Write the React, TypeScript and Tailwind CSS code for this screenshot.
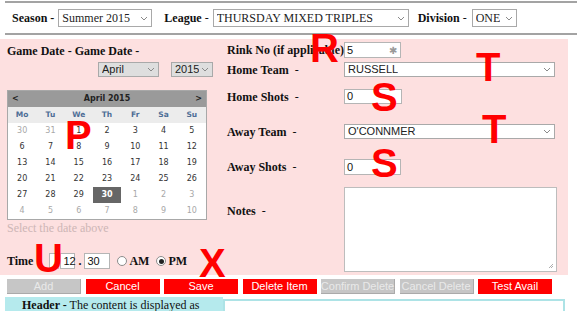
import React from "react";

const serif = "font-['Liberation_Serif','Times_New_Roman',serif]";
const sans = "font-['Liberation_Sans',Arial,sans-serif]";

function Chevron() {
  return (
    <svg width="8" height="5" viewBox="0 0 8 5" className="shrink-0">
      <path d="M1 1l3 3 3-3" fill="none" stroke="#8a8a8a" strokeWidth="1" />
    </svg>
  );
}

function Select({ value, className, font = sans, gray = false }: { value: string; className: string; font?: string; gray?: boolean }) {
  return (
    <div className={`flex items-center justify-between border border-[#a9a9a9] pl-[3px] pr-[3px] leading-[13px] text-[#222] ${gray ? "bg-[#dedede]" : "bg-white"} ${font} ${className}`}>
      <span className="overflow-hidden whitespace-nowrap">{value}</span>
      <Chevron />
    </div>
  );
}

function TextInput({ value, className, children }: { value: string; className: string; children?: React.ReactNode }) {
  return (
    <div className={`flex items-center justify-between border border-[#b5b5b5] bg-white pl-[2px] pr-[3px] text-[11px] leading-[13px] text-[#111] ${sans} ${className}`}>
      <span>{value}</span>
      {children}
    </div>
  );
}

const weeks = [
  [["30", 0], ["31", 0], ["1", 1], ["2", 1], ["3", 1], ["4", 1], ["5", 1]],
  [["6", 1], ["7", 1], ["8", 1], ["9", 1], ["10", 1], ["11", 1], ["12", 1]],
  [["13", 1], ["14", 1], ["15", 1], ["16", 1], ["17", 1], ["18", 1], ["19", 1]],
  [["20", 1], ["21", 1], ["22", 1], ["23", 1], ["24", 1], ["25", 1], ["26", 1]],
  [["27", 1], ["28", 1], ["29", 1], ["30", 2], ["1", 0], ["2", 0], ["3", 0]],
  [["4", 0], ["5", 0], ["6", 0], ["7", 0], ["8", 0], ["9", 0], ["10", 0]],
] as const;

function Calendar() {
  return (
    <div className="mt-[13px] w-[200px] border border-[#a8a8a8] bg-white font-['DejaVu_Sans',Verdana,sans-serif] leading-[10px]">
      <div className="flex h-[16px] items-center justify-between bg-[#9a9a9a] px-[4px] text-[8px] font-bold text-[#222]">
        <span>&lt;</span>
        <span>April 2015</span>
        <span>&gt;</span>
      </div>
      <div className="grid h-[16px] grid-cols-7 items-center bg-[#ececec] text-center text-[7.5px] font-bold text-[#4e6e96]">
        {["Mo", "Tu", "We", "Th", "Fr", "Sa", "Su"].map((d) => (
          <span key={d}>{d}</span>
        ))}
      </div>
      {weeks.map((week, i) => (
        <div key={i} className="grid h-[16px] grid-cols-7 text-center text-[8px]">
          {week.map(([day, kind], j) => (
            <span
              key={j}
              className={`flex items-center justify-center ${
                kind === 2 ? "bg-[#666] font-bold text-white" : kind === 1 ? "text-[#333]" : "text-[#a8a8a8]"
              }`}
            >
              {day}
            </span>
          ))}
        </div>
      ))}
    </div>
  );
}

function Radio({ checked }: { checked?: boolean }) {
  return (
    <span className="flex h-[10px] w-[10px] items-center justify-center rounded-full border border-[#8c8c8c] bg-white">
      {checked && <span className="h-[5px] w-[5px] rounded-full bg-[#222]" />}
    </span>
  );
}

function Row({ label, children, className = "" }: { label: string; children: React.ReactNode; className?: string }) {
  return (
    <div className={`flex items-center ${className}`}>
      <div className="w-[117px] whitespace-pre text-[12px] font-bold leading-[14px] text-[#111]">
        {label}
        <span className="font-normal">{"  -"}</span>
      </div>
      {children}
    </div>
  );
}

const buttons = [
  { label: "Add", on: false },
  { label: "Cancel", on: true },
  { label: "Save", on: true },
  { label: "Delete Item", on: true },
  { label: "Confirm Delete", on: false },
  { label: "Cancel Delete", on: false },
  { label: "Test Avail", on: true },
];

const marks = [
  { ch: "R", cls: "left-[310px] top-[28px]" },
  { ch: "T", cls: "left-[476px] top-[47px]" },
  { ch: "S", cls: "left-[371px] top-[77px]" },
  { ch: "T", cls: "left-[482px] top-[109px]" },
  { ch: "S", cls: "left-[371px] top-[143px]" },
  { ch: "P", cls: "left-[65px] top-[115px]" },
  { ch: "U", cls: "left-[34px] top-[238px]" },
  { ch: "X", cls: "left-[199px] top-[243px]" },
];

export default function App() {
  return (
    <div className={`relative h-[311px] w-[577px] overflow-hidden bg-white leading-[14px] ${serif}`}>
      {/* season / league / division bar */}
      <div className="ml-[5px] mt-[1px] flex h-[34px] items-center border-y-2 border-[#a3a3a3] pl-[7px] text-[12px] text-[#111]">
        <span className="font-bold">Season -</span>
        <Select value="Summer 2015" font={serif} className="ml-[4px] h-[18px] w-[94px] text-[12px]" />
        <span className="ml-[12px] font-bold">League</span>
        <span className="ml-[3px]">-</span>
        <Select value="THURSDAY MIXED TRIPLES" font={serif} className="ml-[4px] h-[18px] w-[196px] text-[12px]" />
        <span className="ml-[9px] font-bold">Division</span>
        <span className="ml-[3px]">-</span>
        <Select value="ONE" font={serif} className="ml-[5px] h-[18px] w-[45px] text-[12px]" />
      </div>

      {/* form */}
      <div className="mt-[4px] flex h-[236px] w-[568px] bg-[#fde0e0]">
        <div className="w-[220px] pl-[7px] pt-[5px]">
          <div className="text-[12px] font-bold leading-[14px] text-[#111]">Game Date - Game Date -</div>
          <div className="mt-[4px] flex h-[15px] gap-[12px] pl-[91px]">
            <Select value="April" gray className="h-[15px] w-[61px] text-[11px]" />
            <Select value="2015" gray className="h-[15px] w-[42px] text-[11px]" />
          </div>
          <Calendar />
          <div className="mt-[1px] text-[12px] leading-[14px] text-[#cdb6b6]">Select the date above</div>
          <div className="mt-[18px] flex h-[16px] items-center text-[12px] text-[#111]">
            <span className="font-bold">Time</span>
            <TextInput value="" className="ml-[16px] h-[16px] w-[10px]" />
            <TextInput value="12" className="ml-[1px] h-[16px] w-[15px]" />
            <span className="mx-[3px] font-bold">.</span>
            <TextInput value="30" className="h-[16px] w-[26px]" />
            <span className="ml-[7px]"><Radio /></span>
            <span className="ml-[2px] font-bold">AM</span>
            <span className="ml-[7px]"><Radio checked /></span>
            <span className="ml-[2px] font-bold">PM</span>
          </div>
        </div>

        <div className="flex-1 pl-[7px] pt-[3px]">
          <div className="flex items-center">
            <div className="w-[117px] overflow-hidden whitespace-nowrap text-[12px] font-bold leading-[14px] text-[#111]">Rink No (if applicable) -</div>
            <TextInput value="5" className="h-[16px] w-[57px]">
              <span className="text-[10px] text-[#9a9a9a]">✱</span>
            </TextInput>
          </div>
          <Row label="Home Team" className="mt-[4px]">
            <Select value="RUSSELL" className="h-[15px] w-[211px] text-[11px]" />
          </Row>
          <Row label="Home Shots" className="mt-[12px]">
            <TextInput value="0" className="h-[15px] w-[58px]" />
          </Row>
          <Row label="Away Team" className="mt-[20px]">
            <Select value="O'CONNMER" className="h-[15px] w-[211px] text-[11px]" />
          </Row>
          <Row label="Away Shots" className="mt-[20px]">
            <TextInput value="0" className="h-[16px] w-[57px]" />
          </Row>
          <div className="mt-[12px] flex items-start">
            <div className="w-[117px] whitespace-pre pt-[17px] text-[12px] font-bold leading-[14px] text-[#111]">
              Notes<span className="font-normal">{"  -"}</span>
            </div>
            <div className="relative h-[85px] w-[213px] border border-[#bdbdbd] bg-white">
              <svg width="6" height="6" viewBox="0 0 6 6" className="absolute bottom-[2px] right-[2px]">
                <path d="M5 1L1 5M5 3L3 5" stroke="#9a9a9a" strokeWidth="0.8" />
              </svg>
            </div>
          </div>
        </div>
      </div>

      {/* buttons */}
      <div className={`ml-[7px] mt-[4px] flex h-[15px] gap-[4.5px] ${sans}`}>
        {buttons.map((b) => (
          <div
            key={b.label}
            className={`flex w-[74px] items-center justify-center whitespace-nowrap text-[11px] leading-[13px] ${
              b.on ? "bg-[#ff0000] text-white" : "border-b border-r border-[#aaa] bg-[#c6c6c6] text-[#e9e9e9]"
            }`}
          >
            {b.label}
          </div>
        ))}
      </div>

      {/* info */}
      <div className="ml-[5px] mt-[3px] flex">
        <div className="h-[20px] w-[218px] bg-[#b5eaed] pl-[17px] pt-[1px] text-[12px] text-[#111]">
          <span className="font-bold">Header -</span> The content is displayed as
        </div>
        <div className="mt-[2px] h-[20px] w-[342px] border-2 border-[#ade3e6] bg-white" />
      </div>

      {/* annotation letters */}
      {marks.map((m, i) => (
        <span key={i} className={`absolute text-[40px] font-bold leading-none text-[#ff0000] ${sans} ${m.cls}`}>
          {m.ch}
        </span>
      ))}
    </div>
  );
}
